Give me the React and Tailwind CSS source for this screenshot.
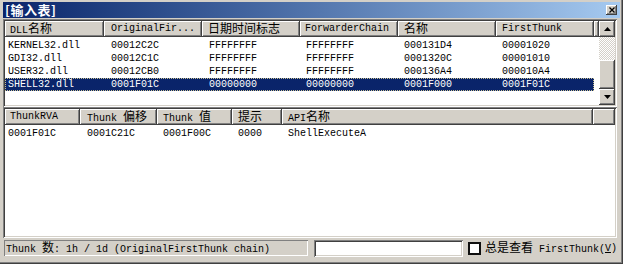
import React from "react";

const CJK = /([\u3000-\u9fff\uff00-\uffef]+)/;

function M({ s }) {
  return (
    <span className="whitespace-pre leading-[14px]">
      {s.split(CJK).map((p, i) =>
        CJK.test(p) ? (
          <span key={i} className="text-[12px] leading-[14px] font-['Noto_Sans_CJK_SC',sans-serif]">
            {p}
          </span>
        ) : (
          <span key={i}>{p}</span>
        )
      )}
    </span>
  );
}

const raised =
  "shadow-[inset_-1px_-1px_#404040,inset_1px_1px_#ffffff,inset_-2px_-2px_#808080]";
const sunken =
  "shadow-[inset_1px_1px_#808080,inset_-1px_-1px_#ffffff,inset_2px_2px_#404040,inset_-2px_-2px_#d4d0c8]";

const topCols = [
  { w: 99, h: "DLL名称", hp: "pl-[5px]", dp: "pl-[3px]" },
  { w: 98, h: "OriginalFir...", hp: "pl-[7px]", dp: "pl-[7px]" },
  { w: 98, h: "日期时间标志", hp: "pl-[6px]", dp: "pl-[7px]" },
  { w: 98, h: "ForwarderChain", hp: "pl-[5px]", dp: "pl-[6px]" },
  { w: 98, h: "名称", hp: "pl-[6px]", dp: "pl-[6px]" },
  { w: 98, h: "FirstThunk", hp: "pl-[6px]", dp: "pl-[6px]" },
];

const topRows = [
  ["KERNEL32.dll", "00012C2C", "FFFFFFFF", "FFFFFFFF", "000131D4", "00001020"],
  ["GDI32.dll", "00012C1C", "FFFFFFFF", "FFFFFFFF", "0001320C", "00001010"],
  ["USER32.dll", "00012CB0", "FFFFFFFF", "FFFFFFFF", "000136A4", "000010A4"],
  ["SHELL32.dll", "0001F01C", "00000000", "00000000", "0001F000", "0001F01C"],
];

const botCols = [
  { w: 75, h: "ThunkRVA", hp: "pl-[5px]", dp: "pl-[3px]" },
  { w: 77, h: "Thunk 偏移", hp: "pl-[7px]", dp: "pl-[7px]" },
  { w: 75, h: "Thunk 值", hp: "pl-[6px]", dp: "pl-[6px]" },
  { w: 50, h: "提示", hp: "pl-[6px]", dp: "pl-[6px]" },
  { w: 311, h: "API名称", hp: "pl-[6px]", dp: "pl-[6px]" },
];

const botRows = [["0001F01C", "0001C21C", "0001F00C", "0000", "ShellExecuteA"]];

function Header({ cols }) {
  return (
    <div className="flex h-[16px] shrink-0">
      {cols.map((c, i) => (
        <div
          key={i}
          style={{ width: c.w }}
          className={`h-full shrink-0 bg-[#d4d0c8] flex items-center whitespace-nowrap ${c.hp} ${raised}`}
        >
          <M s={c.h} />
        </div>
      ))}
      <div className={`h-full flex-1 bg-[#d4d0c8] ${raised}`} />
    </div>
  );
}

function Rows({ cols, rows, sel }) {
  const total = cols.reduce((a, c) => a + c.w, 0);
  return (
    <div className="flex flex-col pt-[2px]">
      {rows.map((r, ri) => {
        const s = ri === sel;
        return (
          <div
            key={ri}
            className={`flex h-[13px] items-center ${
              s
                ? "bg-[#0a246a] text-white outline outline-1 outline-dotted outline-[#c8c090] -outline-offset-1"
                : "text-black"
            }`}
            style={{ width: total }}
          >
            {cols.map((c, ci) => (
              <div key={ci} style={{ width: c.w }} className={`shrink-0 whitespace-nowrap ${c.dp}`}>
                {r[ci]}
              </div>
            ))}
          </div>
        );
      })}
    </div>
  );
}

function Arrow({ up }) {
  return (
    <div className={`h-[16px] w-[16px] bg-[#d4d0c8] flex items-center justify-center ${raised}`}>
      <svg width="7" height="4" viewBox="0 0 7 4">
        {up ? <polygon points="3.5,0 7,4 0,4" fill="#000" /> : <polygon points="0,0 7,0 3.5,4" fill="#000" />}
      </svg>
    </div>
  );
}

export default function App() {
  return (
    <div className="w-[623px] h-[264px] bg-[#d4d0c8] flex flex-col pl-[3px] pr-[6px] pt-[2px] font-['Liberation_Mono',monospace] text-[10px] leading-[13px] text-black overflow-hidden shadow-[inset_-1px_-1px_#404040,inset_-2px_-2px_#808080]">
      {/* Title bar */}
      <div className="h-[16px] -mr-[3px] shrink-0 bg-linear-to-r from-[#0a246a] to-[#a6caf0] flex items-center justify-between pl-[2px] pr-[3px]">
        <span className="text-white font-bold text-[13px] leading-[16px] font-['Noto_Sans_CJK_SC',sans-serif] tracking-[0.5px]">
          [输入表]
        </span>
        <div className={`w-[11px] h-[10px] bg-[#d4d0c8] flex items-center justify-center ${raised}`}>
          <svg width="6" height="6" viewBox="0 0 6 6">
            <path d="M0.5 0.5 L5.5 5.5 M5.5 0.5 L0.5 5.5" stroke="#000" strokeWidth="1.3" />
          </svg>
        </div>
      </div>

      {/* Top list */}
      <div className={`mt-[1px] h-[88px] shrink-0 p-[2px] bg-white ${sunken}`}>
        <div className="flex h-full">
          <div className="flex-1 min-w-0 flex flex-col">
            <Header cols={topCols} />
            <Rows cols={topCols} rows={topRows} sel={3} />
          </div>
          <div className="w-[16px] shrink-0 flex flex-col">
            <Arrow up />
            <div className="h-[23px] bg-[repeating-conic-gradient(#d4d0c8_0%_25%,#ffffff_0%_50%)] bg-size-[2px_2px]" />
            <div className={`flex-1 bg-[#d4d0c8] ${raised}`} />
            <Arrow />
          </div>
        </div>
      </div>

      {/* Bottom list */}
      <div className={`h-[131px] shrink-0 p-[2px] bg-white ${sunken}`}>
        <div className="flex flex-col h-full">
          <Header cols={botCols} />
          <Rows cols={botCols} rows={botRows} sel={-1} />
        </div>
      </div>

      {/* Status bar */}
      <div className="mt-[2px] h-[16px] shrink-0 flex items-center">
        <div className="ml-[1px] w-[304px] h-[16px] shadow-[inset_1px_1px_#808080,inset_-1px_-1px_#ffffff] flex items-center pl-[2px] whitespace-nowrap">
          <M s="Thunk 数: 1h / 1d (OriginalFirstThunk chain)" />
        </div>
        <div className={`ml-[6px] w-[149px] h-[17px] bg-white ${sunken}`} />
        <div className="ml-[5px] w-[13px] h-[13px] bg-white border-2 border-[#101010]" />
        <div className="ml-[4px] whitespace-nowrap flex items-center">
          <M s="总是查看 FirstThunk(" />
          <span className="underline">V</span>
          <span>)</span>
        </div>
      </div>
    </div>
  );
}
